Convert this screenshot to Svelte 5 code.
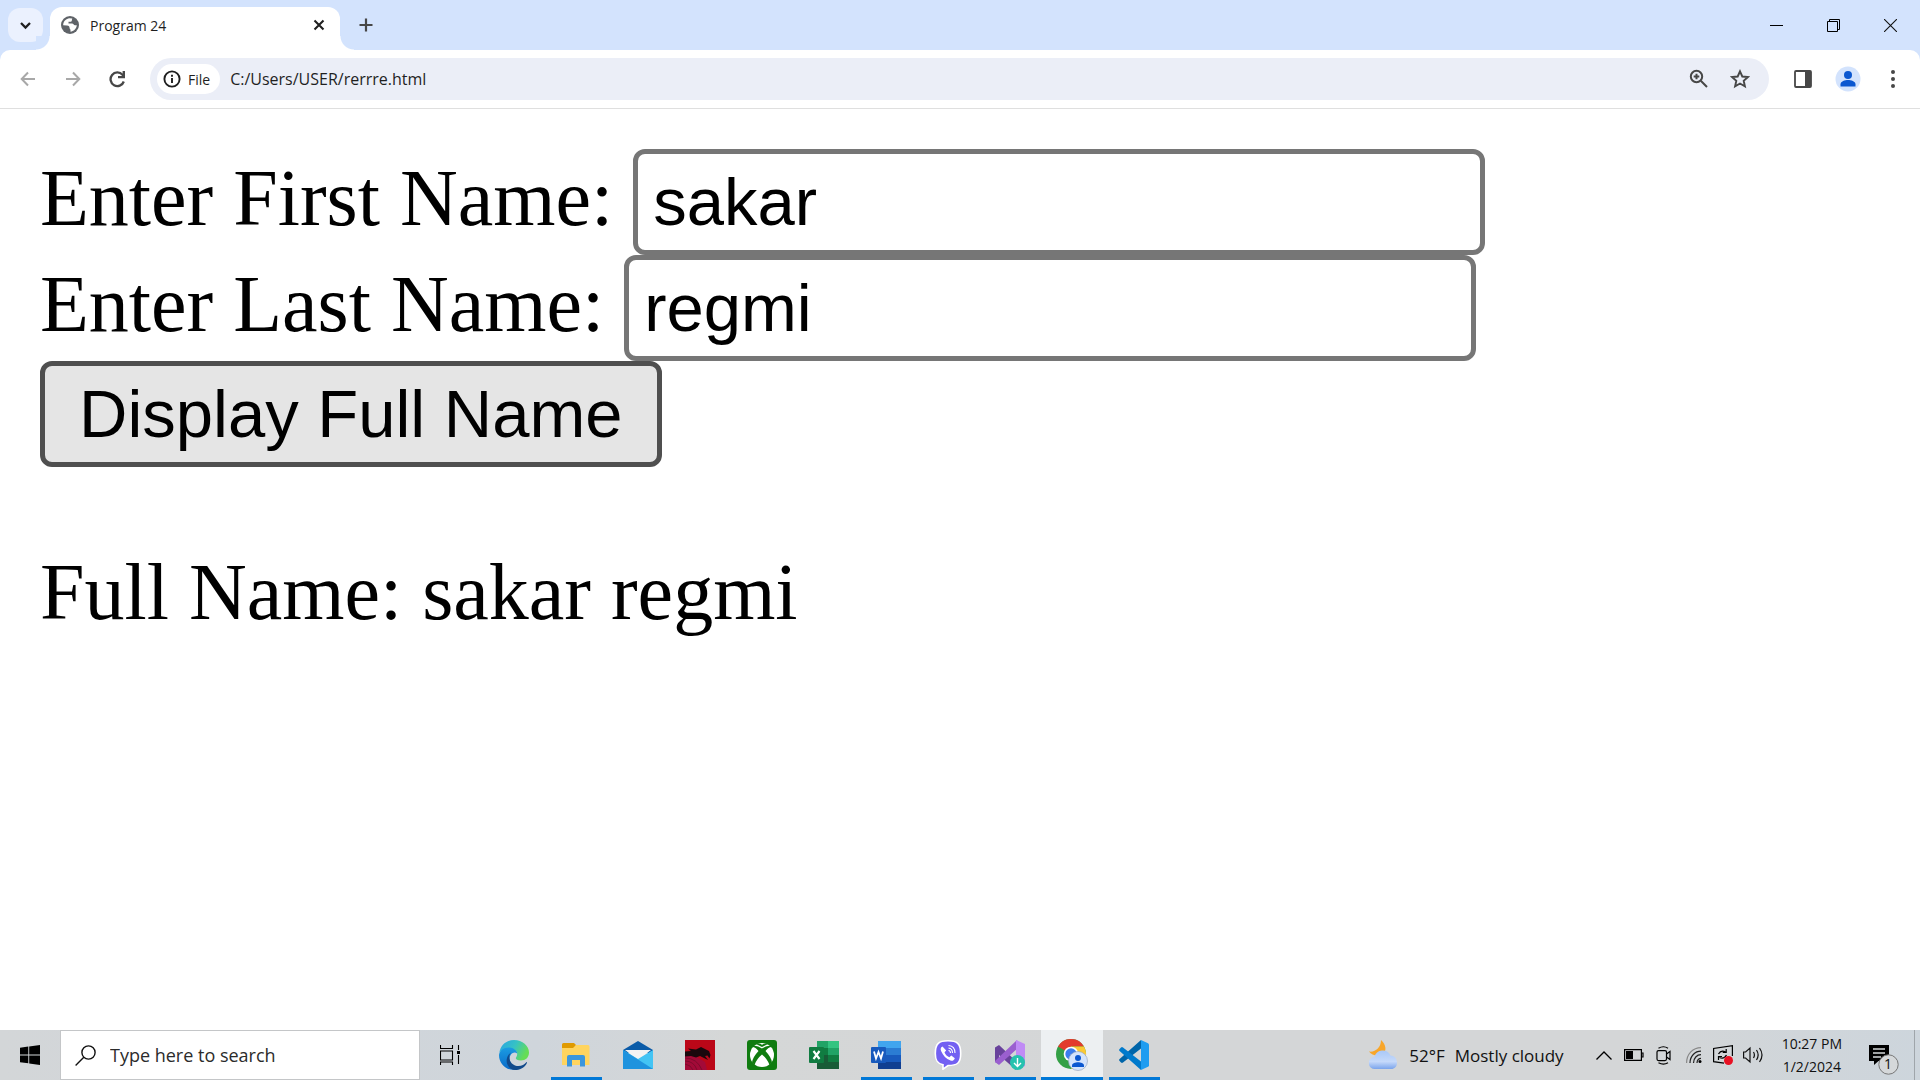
<script>
  let first = $state('sakar');
  let last = $state('regmi');
  let full = $state('sakar regmi');

  function show() {
    full = `${first} ${last}`;
  }
</script>

<div class="window">
  <header class="tabstrip">
    <button class="tabsearch" aria-label="Search tabs">
      <svg width="13" height="9" viewBox="0 0 13 9"><path d="M2 2l4.500 4.500L11 2" fill="none" stroke="#1f1f1f" stroke-width="2.300" /></svg>
    </button>
    <div class="tab">
      <svg width="18" height="18" viewBox="0 0 18 18"><circle cx="9" cy="9" r="9" fill="#5f6368" /><path d="M8 2.200C4.500 3 2 6 2.200 9.300L6 9.500c2 0 2.500 1 2.500 2.300 0 1.100 1 1.200 1 2.300v1.700c3-.5 6-3.200 6.300-6.600l-1.800.1c-1.500 0-1.500-1.700-3-1.700H7.500V5.700h2.200c1.200 0 1.200-1.200 1.200-2l.4-1.100z" fill="#fff" /></svg>
      <span class="title">Program 24</span>
      <button class="close" aria-label="Close tab">
        <svg width="12" height="12" viewBox="0 0 12 12"><path d="M1.500 1.500l9 9m0-9l-9 9" stroke="#1f1f1f" stroke-width="2.100" /></svg>
      </button>
    </div>
    <button class="newtab" aria-label="New tab">
      <svg width="14" height="14" viewBox="0 0 14 14"><path d="M7 .5v13M.5 7h13" stroke="#474747" stroke-width="2.200" /></svg>
    </button>
    <div class="winbuttons">
      <button aria-label="Minimize"><svg width="13" height="13" viewBox="0 0 13 13"><path d="M0 6.500h13" stroke="#000" /></svg></button>
      <button aria-label="Restore"><svg width="13" height="13" viewBox="0 0 13 13"><path d="M.5 2.500h10v10H.5zM2.500 2.500v-2h10v10h-2" fill="none" stroke="#000" /></svg></button>
      <button aria-label="Close"><svg width="13" height="13" viewBox="0 0 13 13"><path d="M0 0l13 13M13 0L0 13" stroke="#111" stroke-width="1.100" /></svg></button>
    </div>
  </header>

  <nav class="toolbar">
    <button class="nav" aria-label="Back"><svg width="16" height="16" viewBox="0 0 16 16"><path d="M15 8H2M8 1.500L1.700 8 8 14.500" fill="none" stroke="#a8a8a8" stroke-width="2" /></svg></button>
    <button class="nav" aria-label="Forward"><svg width="16" height="16" viewBox="0 0 16 16"><path d="M1 8h13M8 1.500L14.300 8 8 14.500" fill="none" stroke="#a8a8a8" stroke-width="2" /></svg></button>
    <button class="nav" aria-label="Reload"><svg width="17" height="17" viewBox="0 0 17 17"><path d="M14.800 10.500A6.800 6.800 0 1 1 13.500 3.800L15 5.500" fill="none" stroke="#474747" stroke-width="2.300" /><path d="M16 0v7.200H9V5h4.600V0z" fill="#474747" /></svg></button>
    <div class="omnibox">
      <button class="chip">
        <svg width="18" height="18" viewBox="0 0 18 18"><circle cx="9" cy="9" r="7.600" fill="none" stroke="#1f1f1f" stroke-width="1.900" /><path d="M9 8v5M9 4.800v1.900" stroke="#1f1f1f" stroke-width="1.900" /></svg>
        File
      </button>
      <input class="url" aria-label="Address" value="C:/Users/USER/rerrre.html" />
      <button class="tool" aria-label="Zoom"><svg width="20" height="20" viewBox="0 0 20 20"><g fill="none" stroke="#474747" stroke-width="2"><circle cx="7.500" cy="7.500" r="5.700" /><path d="M11.800 11.800l6.200 6.200M7.500 4.700v5.600M4.700 7.500h5.600" /></g></svg></button>
      <button class="tool" aria-label="Bookmark"><svg width="20" height="20" viewBox="0 0 20 20"><path d="M10 2.300l2.300 5.200 5.600.5-4.200 3.800 1.200 5.600L10 14.500l-4.900 2.900 1.200-5.600L2.100 8l5.600-.5z" fill="none" stroke="#474747" stroke-width="1.900" /></svg></button>
    </div>
    <button class="action" aria-label="Side panel"><svg width="18" height="18" viewBox="0 0 18 18"><rect x="1" y="1" width="16" height="16" rx="1" fill="none" stroke="#474747" stroke-width="1.800" /><path d="M11 1h6v16h-6z" fill="#474747" /></svg></button>
    <button class="action" aria-label="Profile"><svg width="26" height="26" viewBox="0 0 26 26"><circle cx="13" cy="13" r="12.500" fill="#d3e3fd" /><circle cx="13" cy="9" r="4" fill="#0b57d0" /><path d="M5.500 20.500v-2.300c0-2.800 4.500-4.200 7.500-4.200s7.500 1.400 7.500 4.200v2.300z" fill="#0b57d0" /></svg></button>
    <button class="action" aria-label="Menu"><svg width="6" height="20" viewBox="0 0 6 20"><g fill="#474747"><circle cx="3" cy="3" r="2" /><circle cx="3" cy="10" r="2" /><circle cx="3" cy="17" r="2" /></g></svg></button>
  </nav>

  <main>
    <div class="row"><label for="first">Enter First Name:&nbsp;</label><input id="first" bind:value={first} /></div>
    <div class="row"><label for="last">Enter Last Name:&nbsp;</label><input id="last" bind:value={last} /></div>
    <button class="display" onclick={show}>Display Full Name</button>
    <p>Full Name: {full}</p>
  </main>

  <footer class="taskbar">
    <button class="start" aria-label="Start"><svg width="20" height="20" viewBox="0 0 20 20"><path d="M0 2.800L8.300 1.600V9.500H0zM9.200 1.500L20 0v9.500H9.200zM0 10.400h8.300v7.900L0 17.200zM9.200 10.400H20V20L9.200 18.500z" /></svg></button>
    <label class="search">
      <svg width="21" height="21" viewBox="0 0 21 21"><g fill="none" stroke="#111" stroke-width="1.400"><circle cx="13.500" cy="7.500" r="6.600" /><path d="M8.800 12.200L.6 20.400" /></g></svg>
      <input placeholder="Type here to search" aria-label="Type here to search" />
    </label>
    <button class="start" aria-label="Task view"><svg width="20" height="20" viewBox="0 0 20 20"><path d="M.5 0v3.500h12V0M.5 6h12v9H.5zM.5 20v-3h12v3M18.500 0v5M18.500 10v9" fill="none" stroke="#000" stroke-width="1.100" /><path d="M17 6h3v3h-3z" /></svg></button>

    <div class="apps">
      <button class="app" aria-label="Edge">
        <svg width="30" height="30" viewBox="0 0 30 30">
          <defs>
            <linearGradient id="e1" x1="0" y1="0" x2="1" y2=".4"><stop offset=".1" stop-color="#2aa9df" /><stop offset=".55" stop-color="#36c2c4" /><stop offset="1" stop-color="#66dd55" /></linearGradient>
            <linearGradient id="e2" x1="0" y1="0" x2="0" y2="1"><stop offset="0" stop-color="#1b9ce2" /><stop offset="1" stop-color="#0a6ac8" /></linearGradient>
          </defs>
          <path d="M.3 13C1.500 5 7.500 0 15 0c8.500 0 15 6 15 12.500 0 5-3.500 8-8 8-3.500 0-5.200-1.200-5.200-2.300 0-.9 1.400-1.700 1.400-4.200 0-3-3.200-5.500-7.500-5.500C6 8.500 2 10.500.3 13z" fill="url(#e1)" />
          <path d="M0 15c.5-5 5.500-8 10.500-7.500 4 .3 7.500 2.800 7.700 6-3.500-3-8 1-7.500 6 .4 5 4.300 9 8 9.700C9 32 0 25 0 15z" fill="url(#e2)" />
          <path d="M12 12.500c-3.500 4.500-1.200 11 4 13 5 1.500 9-.5 11.300-3.300 1-.5.700 1 0 2C25 28 20.500 30 16 30c-5-.2-9-5-8.300-10.500.4-3 2-5.500 4.300-7z" fill="#114a8b" />
        </svg>
      </button>
      <button class="app open" aria-label="File Explorer">
        <svg width="28" height="24" viewBox="0 0 28 24"><path d="M0 1.500Q0 0 1.500 0H12l2 2-1.500 3H0z" fill="#e09a00" /><path d="M0 5h11l3-3h12q1.500 0 1.500 1.500V22H0z" fill="#ffd45e" /><path d="M5 23.500V14q0-2 2-2h14q2 0 2 2v9.500h-5V17h-8v6.500z" fill="#3b96dc" /></svg>
      </button>
      <button class="app" aria-label="Mail">
        <svg width="30" height="28" viewBox="0 0 30 28"><path d="M0 9L15 0l15 9v3H0z" fill="#0a5ba8" /><path d="M2 9h26L15 19z" fill="#f3f3f3" /><path d="M0 9l15 9 15-9v19H0z" fill="#43c4f4" /><path d="M0 9l30 19H0z" fill="#1f93de" /></svg>
      </button>
      <button class="app" aria-label="Dragon Center">
        <svg width="30" height="30" viewBox="0 0 30 30"><path d="M0 0h30v30H0z" fill="#bb0718" /><path d="M0 15l12 2 8 5 2 8H0z" fill="#a30a38" /><path d="M0 11.500l6-.5-3-2.500 8 1L16 7l3 1.500 5 2.500 1.500 4-1 3.500-2-3-2.500.5 3 4-5-2.500-3-1.500-4 1.500L6 16l-6 .5z" fill="#1a080d" /><path d="M0 18q12 0 17 12M0 21q9 0 12 9M0 24q6 1 8 6" fill="none" stroke="#7d0a2c" /></svg>
      </button>
      <button class="app" aria-label="Xbox">
        <svg width="30" height="30" viewBox="0 0 30 30"><rect width="30" height="30" rx="3" fill="#107c10" /><circle cx="15" cy="15" r="12" fill="#fff" /><path d="M6 6q4-1 9 2.500Q20 5 24 6l1 1q-3-.5-6.500 4 6 6.500 6.500 11.500L22.500 25q-2-6-7.500-10.500Q9.500 19 7.500 25L5 22.500Q5.500 17.500 11.500 11 8 6.500 5 7zM9 4q3-1.500 6 .8Q18 2.500 21 4l-6 3z" fill="#107c10" /></svg>
      </button>
      <button class="app" aria-label="Excel">
        <svg width="30" height="28" viewBox="0 0 30 28"><path d="M8 0h11v14H8z" fill="#21a366" /><path d="M19 0h11v7H19z" fill="#33c481" /><path d="M8 7h11v7H8z" fill="#107c41" /><path d="M19 7h11v7H19z" fill="#21a366" /><path d="M8 14h11v7H8z" fill="#185c37" /><path d="M19 14h11v7H19z" fill="#107c41" /><path d="M8 21h22v7H8z" fill="#185c37" /><rect y="6" width="15" height="16" rx="1" fill="#107c41" /><path d="M4.500 10l6 8M10.500 10l-6 8" stroke="#fff" stroke-width="2.100" /></svg>
      </button>
      <button class="app open" aria-label="Word">
        <svg width="30" height="28" viewBox="0 0 30 28"><path d="M7 0h23v7H7z" fill="#41a5ee" /><path d="M7 7h23v7H7z" fill="#2b7cd3" /><path d="M7 14h23v7H7z" fill="#185abd" /><path d="M7 21h23v7H7z" fill="#103f91" /><rect y="6" width="15" height="16" rx="1" fill="#185abd" /><path d="M3 10.500l2 7 2.500-6.500L10 17.500l2-7" fill="none" stroke="#fff" stroke-width="1.800" /></svg>
      </button>
      <button class="app open" aria-label="Viber">
        <svg width="30" height="30" viewBox="0 0 30 30"><path d="M15 .8c9 0 12.700 2.700 12.700 12.700S24 25.500 15 25.500l-5 3.700v-4.500C4 23.500 2.300 20 2.300 13.500 2.300 3.500 6 .8 15 .8z" fill="#7360f2" stroke="#fff" stroke-width="1.600" /><path d="M9.500 6.500c-2 1-2.200 2.700-1.300 4.700 2 4.500 4.800 7.500 9.300 9.300 2 .8 3.800-.3 4.300-2.300l-3.500-2.700-2 1.700c-2.500-1-4-2.700-4.800-5l1.700-1.700z" fill="#fff" /><path d="M15.500 5.500q6.500.5 6.500 7.500M15.500 8q4 .5 4 5M15.500 10.500q2 .2 2 2.500" fill="none" stroke="#fff" stroke-width="1.100" /></svg>
      </button>
      <button class="app open" aria-label="Visual Studio Installer">
        <svg width="30" height="30" viewBox="0 0 30 30"><path d="M0 7.500L4 5l19 18-2 7L4 15v9l-4-2z" fill="#68429b" /><path d="M0 22l4 3L24 7l-2-7L0 21z" fill="#9a5fcf" /><path d="M21 0l9 4v22l-9 4z" fill="#c08bf5" /><circle cx="22.500" cy="22.500" r="7.500" fill="#26c2ae" /><path d="M22.500 18v8.500M19 23l3.500 3.500L26 23" fill="none" stroke="#fff" stroke-width="1.400" /></svg>
      </button>
      <button class="app open active" aria-label="Chrome">
        <svg width="32" height="32" viewBox="0 0 32 32"><circle cx="15" cy="15" r="15" fill="#34a046" /><path d="M15 15L2 7.500A15 15 0 0 1 28 7.500H15z" fill="#e33b2e" /><path d="M15 7.500h13A15 15 0 0 1 15 30l6.500-11z" fill="#fcc934" /><circle cx="15" cy="15" r="7.300" fill="#fff" /><circle cx="15" cy="15" r="5.700" fill="#3b7ded" /><circle cx="22" cy="22" r="9.500" fill="#d3e3fd" stroke="#9aa8bd" stroke-width=".7" /><circle cx="22" cy="19" r="3" fill="#0b57d0" /><path d="M16 28v-1.500c0-2.300 3.500-3.300 6-3.300s6 1 6 3.300V28z" fill="#0b57d0" /></svg>
      </button>
      <button class="app open" aria-label="Visual Studio Code">
        <svg width="30" height="30" viewBox="0 0 30 30"><path d="M22 0v8.500L4 22.500q-1 .8-2 0L.6 21q-1-1 0-2z" fill="#0065a9" /><path d="M22 30v-8.500L4 7.500q-1-.8-2 0L.6 9q-1 1 0 2z" fill="#007acc" /><path d="M22 0l7 3.300q1 .5 1 1.500v20.400q0 1-1 1.500L22 30z" fill="#1f9cf0" /></svg>
      </button>
    </div>

    <button class="weather">
      <svg width="30" height="30" viewBox="0 0 30 30"><defs><linearGradient id="cl" x1="0" y1="0" x2="0" y2="1"><stop offset="0" stop-color="#a9c8f8" /><stop offset=".6" stop-color="#c5d9fa" /><stop offset="1" stop-color="#7aa4ec" /></linearGradient></defs><path d="M12 0c5 4 6 11 2 14-4 2.500-11 2-14-2.500 6 1 12-3.500 12-11.500z" fill="#f8a62a" /><path d="M6 29a6 6 0 0 1-.5-12 8.500 8.500 0 0 1 16-1.500A7 7 0 0 1 23.500 29z" fill="url(#cl)" /></svg>
      <span>52°F</span><span>Mostly cloudy</span>
    </button>
    <div class="tray">
      <button aria-label="Show hidden icons"><svg width="16" height="9" viewBox="0 0 16 9"><path d="M.5 8.500L8 1l7.500 7.500" fill="none" stroke="#000" stroke-width="1.300" /></svg></button>
      <button aria-label="Battery"><svg width="20" height="12" viewBox="0 0 20 12"><path d="M.6.6h16.800v10.800H.6zM17.500 4h1.500v4h-1.500" fill="none" stroke="#000" stroke-width="1.200" /><path d="M2 2h7v8H2z" /></svg></button>
      <button aria-label="Meet now"><svg width="16" height="19" viewBox="0 0 16 19"><g fill="none" stroke="#000" stroke-width="1.200"><rect x="1" y="4.600" width="9.500" height="10" rx="1.500" /><path d="M10.500 8l3.500-2.500v8L10.500 11M2.500 2.200Q7.500-.7 12 2.200M2.500 16.800q5 2.800 9.500 0" /></g></svg></button>
      <button aria-label="Network"><svg width="16" height="16" viewBox="0 0 16 16"><g fill="none" stroke="#222" stroke-width="1.200"><path d="M.6 16C.6 7 7 .6 15 .6" stroke="#888" /><path d="M4 16C4 9 9 4.200 15 4.200M7.500 16c0-5 3.500-8.300 7.500-8.300M11 16c0-3 2-4.700 4-4.700" /></g><circle cx="14" cy="14.500" r="1.500" /></svg></button>
      <button aria-label="Windows Update"><svg width="21" height="20" viewBox="0 0 21 20"><path d="M11 18.200L.6 16.700V3.500L19.400.7V11" fill="none" stroke="#000" stroke-width="1.200" /><path d="M5.500 9q2.500-4.500 7-2M13.200 4v3.500H9.700M13.500 10q-2.500 4.500-7 2.500M5.500 15v-3.500H9" fill="none" stroke="#000" stroke-width="1.200" /><circle cx="15.500" cy="15.500" r="4.500" fill="#e81123" /></svg></button>
      <button aria-label="Volume"><svg width="21" height="18" viewBox="0 0 21 18"><path d="M.6 6h2L7 2v14l-4.400-4h-2zM10.500 6q1.800 3 0 6M13.500 4q3.300 5 0 10M16.500 2q5 7 0 14" fill="none" stroke="#111" stroke-width="1.200" /></svg></button>
    </div>
    <button class="clock"><span>10:27 PM</span><span>1/2/2024</span></button>
    <button class="notify" aria-label="Notifications">
      <svg width="32" height="32" viewBox="0 0 32 32"><path d="M0 1h20v16H9.500L5 21v-4H0z" /><path d="M4 5h12M4 9h12M4 13h8" stroke="#d4d7d9" stroke-width="1.300" /><circle cx="19.500" cy="20.500" r="9.700" fill="#d5d8da" stroke="#777" /></svg>
      <span class="badge">1</span>
    </button>
  </footer>
</div>

<style>
  :global(body) {
    margin: 0;
  }
  .window {
    display: flex;
    flex-direction: column;
    min-height: 100vh;
    background: #fff;
    font-family: "Open Sans", "Noto Sans", sans-serif;
    color: #1f1f1f;
  }
  button,
  input {
    font: inherit;
    color: inherit;
    border: 0;
    background: none;
    padding: 0;
    margin: 0;
    outline: 0;
  }
  button {
    display: flex;
    align-items: center;
    justify-content: center;
    flex: none;
  }
  svg {
    display: block;
    flex: none;
  }
  .tabstrip {
    display: flex;
    height: 50px;
    padding: 0 1px 0 8px;
    background: #d3e3fd;
  }
  .tabsearch {
    width: 35px;
    height: 34px;
    margin-top: 8px;
    border-radius: 12px;
    background: #ebf1fe;
  }
  .tab {
    position: relative;
    display: flex;
    align-items: center;
    width: 267px;
    margin: 7px 0 0 7px;
    padding: 0 12px 7px 11px;
    box-sizing: content-box;
    border-radius: 12px 12px 0 0;
    background: #fff;
    height: 36px;
  }
  .tab::before,
  .tab::after {
    content: "";
    position: absolute;
    bottom: 0;
    width: 14px;
    height: 14px;
  }
  .tab::before {
    right: 100%;
    background: radial-gradient(circle at 0 0, #d3e3fd 13px, #fff 14px);
  }
  .tab::after {
    left: 100%;
    background: radial-gradient(circle at 100% 0, #d3e3fd 13px, #fff 14px);
  }
  .title {
    flex: 1;
    margin-left: 11px;
    font-size: 14px;
  }
  .close {
    width: 18px;
    height: 18px;
  }
  .newtab {
    width: 34px;
    margin-left: 9px;
  }
  .winbuttons {
    display: flex;
    margin-left: auto;
  }
  .winbuttons button {
    width: 57px;
  }
  .toolbar {
    display: flex;
    align-items: center;
    height: 58px;
    padding: 0 5px;
    border-bottom: 1px solid #dfdfdf;
    border-radius: 10px 10px 0 0;
    background: #fff;
    box-shadow: 0 -10px 0 #d3e3fd;
    clip-path: inset(0);
  }
  .window {
    background: linear-gradient(#d3e3fd 70px, #fff 70px);
  }
  .nav {
    width: 45px;
    height: 42px;
  }
  .omnibox {
    display: flex;
    align-items: center;
    flex: 1;
    height: 42px;
    margin: 0 11px 0 10px;
    padding: 0 9px 0 7px;
    border-radius: 21px;
    background: #ebeef7;
  }
  .chip {
    gap: 7px;
    height: 30px;
    padding: 0 10px 0 6px;
    border-radius: 15px;
    background: #fff;
    font-size: 14px;
  }
  .url {
    flex: 1;
    margin-left: 10px;
    font-size: 16px;
  }
  .tool {
    width: 41px;
  }
  .action {
    width: 45px;
  }
  main {
    flex: 1;
    padding: 40px;
    background: #fff;
    font: 80px "Liberation Serif", serif;
    color: #000;
  }
  .row {
    display: flex;
    align-items: baseline;
    height: 106px;
  }
  .row input {
    box-sizing: border-box;
    width: 852px;
    height: 106px;
    padding: 4px 15px 6px;
    border: 5px solid #767676;
    border-radius: 12px;
    font: 67px "Liberation Sans", sans-serif;
  }
  .display {
    height: 106px;
    padding: 0 34px 2px;
    border: 5px solid #4f4f4f;
    border-radius: 12px;
    background: #e5e5e5;
    font: 67px "Liberation Sans", sans-serif;
  }
  p {
    margin: 80px 0 0;
  }
  .taskbar {
    display: flex;
    height: 50px;
    padding-right: 5px;
    background: linear-gradient(90deg, #d3d6d8, #cfd5db 28%, #d5d7d7 38%, #d4d6d7 60%, #d4d6d7 85%, #cdd5dc);
    color: #111;
  }
  .start {
    width: 60px;
  }
  .search {
    display: flex;
    align-items: center;
    gap: 14px;
    box-sizing: border-box;
    width: 360px;
    padding-left: 14px;
    border: 1px solid #c4c6c8;
    background: #fff;
  }
  .search input {
    flex: 1;
    min-width: 0;
    font-size: 18px;
  }
  .search input::placeholder {
    color: #2b2b2b;
    opacity: 1;
  }
  .apps {
    display: flex;
    margin-left: 3px;
  }
  .app {
    position: relative;
    width: 62px;
  }
  .app.open::after {
    content: "";
    position: absolute;
    bottom: 0;
    left: 6px;
    right: 5px;
    height: 3px;
    background: #0078d7;
  }
  .app.active {
    background: #edf0f2;
  }
  .app.active::after {
    left: 0;
    right: 0;
  }
  .weather {
    gap: 10px;
    margin-left: auto;
    margin-right: 25px;
    font-size: 17px;
  }
  .tray {
    display: flex;
    margin-right: 13px;
  }
  .tray button {
    width: 30px;
  }
  .clock {
    flex-direction: column;
    margin-right: 27px;
    font-size: 14px;
    line-height: 23px;
  }
  .notify {
    position: relative;
    padding: 10px 13px 0 0;
    border-right: 1px solid #9fa5aa;
  }
  .badge {
    position: absolute;
    left: 15px;
    top: 24px;
    font-size: 14px;
    line-height: 20px;
  }
</style>
